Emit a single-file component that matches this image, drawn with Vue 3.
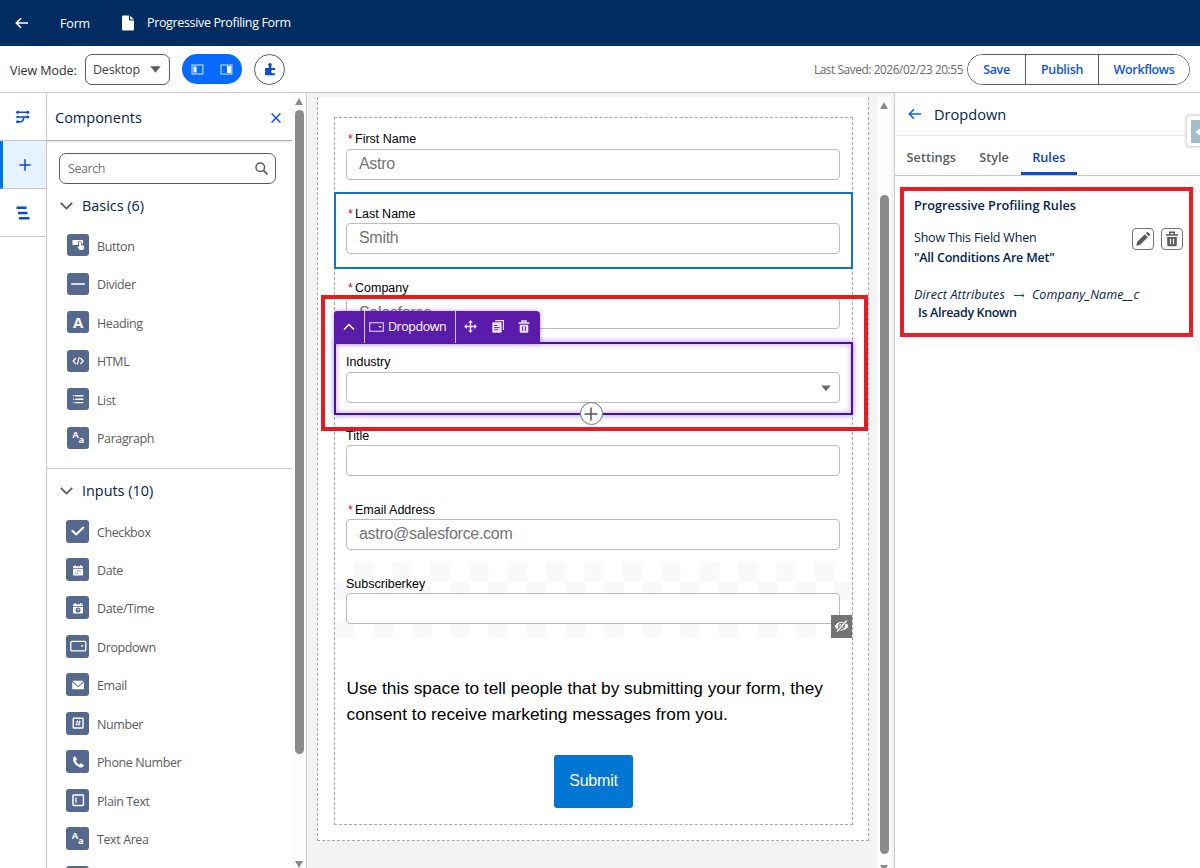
<script setup>
import { ref } from "vue";

const search = ref("");
const activeTab = ref("Rules");
const tabs = ["Settings", "Style", "Rules"];

// 22x22 glyphs, letters are drawn as text instead
const glyphs = {
  button: '<path fill="#fff" d="M5.5 6h10.5v4h-1.2V8.8a1.9 1.9 0 0 0-3.8 0V11H5.5z"/><path fill="#fff" d="M12 8.6a1 1 0 0 1 2 0V11l2.2.5q.8.2.8 1v1.2q0 2.3-1.6 2.3h-2.2q-.6 0-1-.6l-1.8-2.3q.6-1 1.6-.2z"/>',
  divider: '<path stroke="#fff" stroke-width="1.6" stroke-linecap="round" d="M4.8 11h12.6"/>',
  html: '<path fill="none" stroke="#fff" stroke-width="1.3" d="M9 8l-2.8 3L9 14M13.4 8l2.8 3-2.8 3M12.2 7.2l-2 7.6"/>',
  list: '<path stroke="#fff" stroke-width="1.4" d="M8.2 7.8h8.2M8.2 11.2h8.2M8.2 14.6h8.2M6 7.8h1.3M6 11.2h1.3M6 14.6h1.3"/>',
  checkbox: '<path fill="none" stroke="#fff" stroke-width="2.1" stroke-linecap="round" stroke-linejoin="round" d="M5.4 10.8l3.6 3.6 7.4-6.8"/>',
  date: '<path fill="#fff" d="M6 7.2h1.6V6H9v1.2h4V6h1.4v1.2H16V9H6zM6 9.8h10v5.6q0 1-1 1H7q-1 0-1-1z"/><path stroke="#54698d" stroke-width="1.1" d="M10.2 11.9h1.1M12.5 11.9h1.1M8 14.2h1.1M10.2 14.2h1.1"/>',
  datetime: '<path fill="#fff" d="M6 7.2h1.6V6H9v1.2h4V6h1.4v1.2H16V9H6zM6 9.8h10v5.6q0 1-1 1H7q-1 0-1-1z"/><circle cx="11" cy="13" r="2.5" fill="#54698d"/><path stroke="#fff" stroke-width=".8" fill="none" d="M11 11.6V13h1.2"/>',
  dropdown: '<rect x="3.8" y="6.4" width="15" height="9.4" rx="1" fill="none" stroke="#fff" stroke-width="1.3"/><path fill="#fff" d="M13.6 10.2h3l-1.5 2z"/>',
  email: '<path fill="#fff" d="M5.4 6.8h11.4l-5.7 5.2zM5.2 8l5.9 5.3L17 8v6.4q0 .9-.9.9H6.1q-.9 0-.9-.9z"/>',
  number: '<rect x="6.2" y="6.2" width="9.8" height="9.8" rx=".6" fill="none" stroke="#fff" stroke-width="1.4"/><path stroke="#fff" stroke-width=".9" d="M10.4 8.4l-.9 5.2M12.8 8.4l-.9 5.2M8.8 10h5M8.4 12.2h5"/>',
  phone: '<path fill="#fff" d="M6.9 5.7q.9-.8 1.6.2l1.1 1.7q.5.8-.2 1.5-.9.6-.4 1.4 1 1.8 2.8 2.7.8.5 1.4-.4.6-.8 1.4-.2l1.7 1.1q1 .7.2 1.6-1.6 2-4.2.9-4.6-1.9-6-6.3-.7-2.6.6-4.2z"/>',
  plain: '<rect x="6" y="6" width="10.4" height="10.4" rx=".6" fill="none" stroke="#fff" stroke-width="1.5"/><path stroke="#fff" stroke-width="1.2" d="M9 8.4v5.6"/>',
  blank: "",
};

const basics = [
  { name: "Button", icon: "button" },
  { name: "Divider", icon: "divider" },
  { name: "Heading", big: "A" },
  { name: "HTML", icon: "html" },
  { name: "List", icon: "list" },
  { name: "Paragraph", big: "A", small: "a" },
];
const inputs = [
  { name: "Checkbox", icon: "checkbox" },
  { name: "Date", icon: "date" },
  { name: "Date/Time", icon: "datetime" },
  { name: "Dropdown", icon: "dropdown" },
  { name: "Email", icon: "email" },
  { name: "Number", icon: "number" },
  { name: "Phone Number", icon: "phone" },
  { name: "Plain Text", icon: "plain" },
  { name: "Text Area", big: "A", small: "a" },
  { name: "", icon: "blank" },
];
const sections = [
  { title: "Basics (6)", items: basics, key: "basics" },
  { title: "Inputs (10)", items: inputs, key: "inputs" },
];

const fields = [
  { label: "First Name", required: true, placeholder: "Astro" },
  { label: "Last Name", required: true, placeholder: "Smith", state: "hovered" },
  { label: "Company", required: true, placeholder: "Salesforce" },
  { label: "Industry", state: "selected" },
  { label: "Title" },
  { label: "Email Address", required: true, placeholder: "astro@salesforce.com" },
  { label: "Subscriberkey", state: "concealed" },
];
</script>

<template>
  <div class="builder">
    <header class="top-bar">
      <div class="top-back">
        <svg width="14" height="12" viewBox="0 0 14 12"><path d="M13 6H1.500M6 1.200L1.300 6 6 10.800" fill="none" stroke="#fff" stroke-width="1.600" /></svg>
      </div>
      <div class="top-form">Form</div>
      <div class="top-name">
        <svg width="14" height="16" viewBox="0 0 14 16"><path d="M2 .5h6V4.500q0 1 1 1h4V14q0 1.500-1.500 1.500h-9Q1 15.500 1 14V2Q1 .5 2 .5zM9.200.700L13 4.500H9.200z" fill="#fff" /></svg>
        <span>Progressive Profiling Form</span>
      </div>
    </header>

    <div class="tool-bar">
      <span class="view-label">View Mode:</span>
      <button class="view-select">
        <span>Desktop</span>
        <svg width="11" height="7" viewBox="0 0 11 7"><path d="M.3.300h10.400L5.500 6.700z" fill="#5c5c5c" /></svg>
      </button>
      <div class="pane-toggle">
        <svg width="13" height="11" viewBox="0 0 13 11"><rect x="1" y="1" width="10.800" height="9" fill="none" stroke="#a9cdff" stroke-width="1.300" /><path d="M2.500 2.500h3v6h-3z" fill="#fff" /></svg>
        <svg width="13" height="11" viewBox="0 0 13 11"><rect x="1" y="1" width="10.800" height="9" fill="none" stroke="#a9cdff" stroke-width="1.300" /><path d="M7 2h4v7H7z" fill="#fff" /></svg>
      </div>
      <button class="round-button">
        <svg width="12" height="14" viewBox="0 0 12 14"><path d="M1.500 6h3.300V4.200a1.800 1.800 0 1 1 2.400 0V6h3.300q.5 0 .5.500v1.400H9.500a1.800 1.800 0 1 0 0 3.400H11v1.200q0 .8-.8.8h-8.400q-.8 0-.8-.8V10.500q1-.7 0-1.600V6.500q0-.5.500-.5z" fill="#0b4bd0" /></svg>
      </button>
      <span class="last-saved">Last Saved: 2026/02/23 20:55</span>
      <div class="button-group">
        <button class="save">Save</button>
        <button class="publish">Publish</button>
        <button class="workflows">Workflows</button>
      </div>
    </div>

    <div class="workspace">
      <nav class="rail">
        <div class="rail-item">
          <svg width="14" height="14" viewBox="0 0 14 14"><path d="M1 2.200h11M1 7h11M1 11.800h3.500Q7 11.800 8 7" fill="none" stroke="#0b4bd0" stroke-width="1.500" /><g fill="#0b4bd0"><circle cx="1.600" cy="2.200" r="1.500" /><circle cx="11.800" cy="2.200" r="1.500" /><circle cx="11.800" cy="7" r="1.500" /><circle cx="1.600" cy="7" r="1.300" /><circle cx="1.600" cy="11.800" r="1.500" /></g></svg>
        </div>
        <div class="rail-item rail-active">
          <svg width="12" height="12" viewBox="0 0 12 12"><path d="M6 .3v11.400M.3 6h11.400" stroke="#0b4bd0" stroke-width="1.500" /></svg>
        </div>
        <div class="rail-item">
          <svg width="14" height="14" viewBox="0 0 14 14"><path d="M.5 1.700h10M2 7h9.500M3 12.300h10.500" stroke="#0b4bd0" stroke-width="2.400" /></svg>
        </div>
      </nav>

      <aside class="components">
        <div class="components-body">
          <div class="components-head">
            <span>Components</span>
            <svg width="10" height="10" viewBox="0 0 10 10"><path d="M.6.600l8.800 8.800M9.400.600L.6 9.400" stroke="#0b4bd0" stroke-width="1.400" /></svg>
          </div>
          <div class="search-box">
            <input v-model="search" placeholder="Search" />
            <svg width="13" height="13" viewBox="0 0 13 13"><circle cx="5.300" cy="5.300" r="4.300" fill="none" stroke="#5c5c5c" stroke-width="1.500" /><path d="M8.400 8.400l4 4" stroke="#5c5c5c" stroke-width="1.700" /></svg>
          </div>
          <section v-for="section in sections" :key="section.key" :class="section.key">
            <div class="section-title">
              <svg width="13" height="8" viewBox="0 0 13 8"><path d="M.8.900l5.700 5.700L12.200.900" fill="none" stroke="#555" stroke-width="1.700" /></svg>
              <span>{{ section.title }}</span>
            </div>
            <div v-for="item in section.items" :key="item.name" class="component-item">
              <span class="tile">
                <svg v-if="item.icon" width="22" height="22" viewBox="0 0 22 22" v-html="glyphs[item.icon]"></svg>
                <template v-else>
                  <b :class="{ heading: !item.small }">{{ item.big }}</b>
                  <b v-if="item.small" class="lower">{{ item.small }}</b>
                </template>
              </span>
              <span>{{ item.name }}</span>
            </div>
          </section>
        </div>
        <div class="scroll-track">
          <i class="arrow-up"></i>
          <i class="thumb"></i>
          <i class="arrow-down"></i>
        </div>
      </aside>

      <main class="canvas">
        <div class="page">
          <div class="form">
            <div v-for="field in fields" :key="field.label" class="field" :class="field.state">
              <label><em v-if="field.required">*</em>{{ field.label }}</label>
              <div class="control">
                {{ field.placeholder }}
                <svg v-if="field.state === 'selected'" class="caret" width="10" height="7" viewBox="0 0 10 7"><path d="M.3.500h9.400L5 6.300z" fill="#6b6b6b" /></svg>
              </div>
              <div v-if="field.state === 'hovered'" class="hover-outline"></div>
              <template v-if="field.state === 'selected'">
                <div class="select-outline"></div>
                <div class="field-tools">
                  <span class="tool-up"><svg width="12" height="8" viewBox="0 0 12 8"><path d="M1 6.500l5-5 5 5" fill="none" stroke="#fff" stroke-width="1.500" /></svg></span>
                  <span class="tool-name">
                    <svg width="15" height="10" viewBox="0 0 15 10"><rect x=".7" y=".7" width="13.600" height="8.600" fill="none" stroke="#d9c6f3" stroke-width="1.200" /><path d="M9.500 4h3L11 6z" fill="#fff" /></svg>
                    Dropdown
                  </span>
                  <span class="tool-actions">
                    <svg width="13" height="13" viewBox="0 0 13 13"><path d="M6.500 2v9M2 6.500h9" stroke="#eee4fa" stroke-width="1.500" /><path d="M6.500 0l2.400 2.800H4.100zM6.500 13l2.400-2.800H4.100zM0 6.500l2.800-2.400v4.800zM13 6.500l-2.800-2.400v4.800z" fill="#eee4fa" /></svg>
                    <svg width="12" height="13" viewBox="0 0 12 13"><path d="M3.200.500h8.300v9.500" fill="none" stroke="#eee4fa" stroke-width="1.300" /><rect x=".3" y="2.300" width="9.300" height="10.400" rx=".8" fill="#eee4fa" /><path d="M2.200 5.500h3M2.200 7.600h5.400M2.200 9.700h4" stroke="#5a1ba9" stroke-width=".9" /></svg>
                    <svg width="12" height="13" viewBox="0 0 12 13"><path d="M.5 3h11M4 2.600V1h4v1.600" fill="none" stroke="#eee4fa" stroke-width="1.500" /><path d="M1.700 4.700h8.600v7q0 1-1 1H2.700q-1 0-1-1z" fill="#eee4fa" /><path d="M4.600 6.300v4.600M7.400 6.300v4.600" stroke="#5a1ba9" stroke-width="1" /></svg>
                  </span>
                </div>
                <span class="add-below"><svg width="14" height="14" viewBox="0 0 14 14"><path d="M7 .5v13M.5 7h13" stroke="#555" stroke-width="1.500" /></svg></span>
              </template>
              <span v-if="field.state === 'concealed'" class="hidden-badge">
                <svg width="15" height="12" viewBox="0 0 15 12"><path d="M.7 6.500Q3 1.800 7.700 1.800q4.700 0 6.700 4.500Q12 10.400 7.500 10.400 3 10.400.7 6.500z" fill="#fff" /><circle cx="7.500" cy="6.100" r="2.800" fill="none" stroke="#747474" stroke-width="1.100" /><path d="M12.800.200L2.900 11.800" stroke="#747474" stroke-width="3" /><path d="M12.600.500L3 11.600" stroke="#fff" stroke-width="1.400" /></svg>
              </span>
            </div>
            <p class="consent">Use this space to tell people that by submitting your form, they<br />consent to receive marketing messages from you.</p>
            <button class="submit">Submit</button>
          </div>
        </div>
        <div class="mark-box"></div>
        <div class="scroll-track">
          <i class="arrow-up"></i>
          <i class="thumb"></i>
          <i class="arrow-down"></i>
        </div>
      </main>

      <aside class="settings">
        <div class="settings-head">
          <svg width="14" height="12" viewBox="0 0 14 12"><path d="M13 6H1.500M6 1.200L1.300 6 6 10.800" fill="none" stroke="#0b5cf0" stroke-width="1.500" /></svg>
          <span>Dropdown</span>
        </div>
        <div class="tabs">
          <span v-for="tab in tabs" :key="tab" :class="{ active: tab === activeTab }" @click="activeTab = tab">{{ tab }}</span>
        </div>
        <div class="rules">
          <h3>Progressive Profiling Rules</h3>
          <div class="rule-head">
            <div class="rule-text">
              <span>Show This Field When</span>
              <strong>"All Conditions Are Met"</strong>
            </div>
            <button class="icon-button">
              <svg width="16" height="16" viewBox="0 0 16 16"><path d="M1.200 14.800l1-4L9.800 3.200l3 3L5.200 13.800zM10.700 2.300l1.100-1.100q.6-.5 1.200 0l1.800 1.800q.5.600 0 1.200l-1.100 1.100z" fill="#5c5c5c" /></svg>
            </button>
            <button class="icon-button">
              <svg width="14" height="16" viewBox="0 0 14 16"><path d="M1 4h12M4.800 3.400V1.300h4.400v2.100" fill="none" stroke="#5c5c5c" stroke-width="1.600" /><path d="M2.200 6h9.600v8q0 1.200-1.200 1.200H3.400q-1.200 0-1.200-1.200z" fill="#5c5c5c" /><path d="M5.500 7.800v5.400M8.500 7.800v5.400" stroke="#fff" stroke-width="1.100" /></svg>
            </button>
          </div>
          <div class="rule-path">
            <em>Direct Attributes</em>
            <svg width="11" height="7" viewBox="0 0 11 7"><path d="M0 3.500h10M8.300 1.900l1.800 1.600-1.800 1.600" fill="none" stroke="#2b4468" stroke-width="1" /></svg>
            <em>Company_Name__c</em>
          </div>
          <strong class="rule-result">Is Already Known</strong>
        </div>
        <div class="side-handle">
          <span><svg width="8" height="12" viewBox="0 0 8 12"><path d="M8 0v12L.5 6z" fill="#fff" /></svg></span>
        </div>
      </aside>
    </div>
  </div>
</template>

<style>
body {
  margin: 0;
  overflow: hidden;
}
</style>

<style scoped>
* {
  box-sizing: border-box;
}
.builder {
  display: flex;
  flex-direction: column;
  width: 1200px;
  height: 868px;
  overflow: hidden;
  background: #fff;
  font-family: "Open Sans", "Noto Sans", sans-serif;
  font-size: 12.5px;
  letter-spacing: -0.2px;
  color: #03234d;
}
svg {
  display: block;
  flex: none;
}
button {
  font: inherit;
  letter-spacing: inherit;
  padding: 0;
  background: #fff;
}

/* top bar */
.top-bar {
  display: flex;
  flex: none;
  height: 46px;
  background: #032d60;
  color: #fff;
  font-weight: 500;
}
.top-bar > div {
  display: flex;
  align-items: center;
}
.top-back {
  width: 45px;
  padding-left: 15px;
  border-right: 1px solid #02275a;
}
.top-form {
  width: 60px;
  padding: 1px 0 0 1px;
  justify-content: center;
  border-right: 1px solid #02275a;
}
.top-name {
  padding: 0 0 1px 16px;
  gap: 12px;
  letter-spacing: -0.35px;
}

/* tool bar */
.tool-bar {
  display: flex;
  flex: none;
  align-items: center;
  height: 47px;
  padding: 0 10px;
  border-bottom: 1px solid #c9c9c9;
}
.view-label {
  width: 75px;
  padding-top: 2px;
  color: #2e2e2e;
  font-weight: 500;
  letter-spacing: -0.05px;
  white-space: nowrap;
}
.view-select {
  display: flex;
  align-items: center;
  justify-content: space-between;
  width: 85px;
  height: 31px;
  padding: 0 8px 0 7px;
  border: 1px solid #5c5c5c;
  border-radius: 7px;
  color: #444;
}
.pane-toggle {
  display: flex;
  align-items: center;
  justify-content: space-between;
  width: 60px;
  height: 30px;
  margin: 0 12px;
  padding: 0 9px;
  border-radius: 15px;
  background: #066afe;
}
.round-button {
  display: flex;
  align-items: center;
  justify-content: center;
  width: 31px;
  height: 31px;
  border: 1px solid #5c5c5c;
  border-radius: 50%;
}
.last-saved {
  margin-left: auto;
  margin-right: 4px;
  color: #6b6b6b;
  font-size: 11.8px;
  letter-spacing: -0.4px;
}
.button-group {
  display: flex;
  height: 31px;
  border: 1px solid #5c5c5c;
  border-radius: 16px;
  overflow: hidden;
}
.button-group button {
  border: 0;
  border-right: 1px solid #5c5c5c;
  color: #0b57d8;
  font-weight: 600;
  letter-spacing: -0.35px;
}
.save {
  width: 58px;
}
.publish {
  width: 73px;
}
.button-group .workflows {
  width: 90px;
  border-right: 0;
}

.workspace {
  display: flex;
  flex: 1;
  min-height: 0;
}

/* left rail */
.rail {
  flex: none;
  width: 47px;
  border-right: 1px solid #c9c9c9;
}
.rail-item {
  display: flex;
  align-items: center;
  justify-content: center;
  height: 48px;
  border-bottom: 1px solid #c9c9c9;
}
.rail-active {
  border-left: 3px solid #0176d3;
  background: #e6f2fd;
}

/* components panel */
.components {
  display: flex;
  flex: none;
  width: 260px;
  border-right: 1px solid #c9c9c9;
  overflow: hidden;
}
.components-body {
  width: 245px;
  flex: none;
}
.components-head {
  display: flex;
  align-items: center;
  justify-content: space-between;
  height: 48px;
  padding: 2px 11px 0 8px;
  border-bottom: 1px solid #aaa;
  box-shadow: 0 1px 2px rgba(0, 0, 0, 0.12);
  font-size: 14.5px;
  letter-spacing: 0;
}
.search-box {
  display: flex;
  align-items: center;
  width: 217px;
  height: 31px;
  margin: 12px 0 0 12px;
  padding: 0 7px 0 8px;
  border: 1px solid #5c5c5c;
  border-radius: 7px;
}
.search-box input {
  flex: 1;
  min-width: 0;
  padding: 0;
  border: 0;
  outline: 0;
  font: inherit;
  letter-spacing: -0.45px;
}
.search-box input::placeholder {
  color: #747474;
}
.section-title {
  display: flex;
  align-items: center;
  gap: 9px;
  padding-left: 13px;
  font-size: 14.4px;
  letter-spacing: 0;
}
.basics .section-title {
  height: 43px;
}
.inputs {
  margin-top: 10px;
  border-top: 1px solid #c9c9c9;
}
.inputs .section-title {
  height: 44px;
}
.component-item {
  display: flex;
  align-items: center;
  gap: 8px;
  height: 38.45px;
  padding-left: 20px;
  color: #5c5c5c;
  letter-spacing: -0.4px;
}
.component-item > span:last-child {
  padding-top: 0.5px;
}
.inputs .component-item {
  padding-left: 19px;
}
.tile {
  display: flex;
  align-items: center;
  justify-content: center;
  width: 22px;
  height: 22px;
  margin-top: -1.5px;
  border-radius: 3px;
  background: #54698d;
  color: #fff;
}
.inputs .tile {
  width: 23px;
  height: 23px;
}
.tile b {
  font-size: 9.5px;
  line-height: 10px;
  margin-top: -5px;
}
.tile .lower {
  margin-top: 4px;
}
.tile .heading {
  font-size: 15px;
  line-height: 20px;
  margin-top: -1px;
}

/* scrollbars */
.scroll-track {
  display: flex;
  flex-direction: column;
  align-items: center;
  flex: none;
  width: 14px;
  background: #fcfcfc;
}
.arrow-up,
.arrow-down {
  flex: none;
  width: 0;
  border: 4.5px solid transparent;
}
.arrow-up {
  margin-top: 5px;
  border-top: 0;
  border-bottom: 7px solid #8b8b8b;
}
.arrow-down {
  border-bottom: 0;
  border-top: 7px solid #8b8b8b;
}
.thumb {
  flex: none;
  width: 9px;
  border-radius: 5px;
  background: #8b8b8b;
}
.components .thumb {
  height: 644px;
  margin: 5px 0 107px;
}

/* canvas */
.canvas {
  position: relative;
  display: flex;
  flex: none;
  justify-content: space-between;
  width: 588px;
  padding: 4px 3px 0 10px;
  border-right: 1px solid #c9c9c9;
  background: #f3f3f3;
  overflow: hidden;
}
.canvas .thumb {
  height: 659px;
  margin: 86px 0 11px;
}
.page {
  width: 552px;
  height: 744px;
  padding: 20px 15px 15px 16px;
  border: 1px dashed #aaa;
  border-top: 0;
  background: #fff;
}
.form {
  width: 519px;
  height: 708px;
  border: 1px dashed #aaa;
  font-family: "Liberation Sans", Arial, sans-serif;
  letter-spacing: 0;
  color: #000;
}
.field {
  position: relative;
  height: 74.1px;
  padding: 11px 12px 0 11px;
}
.field:nth-child(-n + 3) {
  height: 74.3px;
}
.field.selected {
  height: 73.4px;
}
.field label {
  display: flex;
  align-items: center;
  height: 20px;
  padding-top: 0.6px;
  font-size: 12.5px;
}
.field em {
  width: 9px;
  padding-left: 2px;
  color: #ea001e;
  font-style: normal;
}
.control {
  display: flex;
  align-items: center;
  width: 494px;
  height: 31px;
  padding: 0 9px 1px 12px;
  border: 1px solid #bcbcbc;
  border-radius: 4px;
  background: #fff;
  color: #747474;
  font-size: 16px;
  letter-spacing: -0.3px;
}
.caret {
  margin: 4px -1px 0 auto;
}
.hover-outline {
  position: absolute;
  inset: 0 -1px -2px -1px;
  border: 2px solid #1173cf;
}
.select-outline {
  position: absolute;
  inset: 1px -1px -1px -1px;
  border: 2px solid #4a0f9c;
  box-shadow: 0 0 5px 1px rgba(120, 50, 220, 0.45), inset 0 0 5px 1px rgba(120, 50, 220, 0.35);
}
.field-tools {
  position: absolute;
  display: flex;
  left: -1px;
  top: -30px;
  width: 206px;
  height: 32px;
  border-radius: 3px 4px 0 0;
  background: #5a1ba9;
  color: #fff;
  box-shadow: 0 0 4px rgba(120, 50, 220, 0.5);
  font: 500 12.5px "Open Sans", "Noto Sans", sans-serif;
  letter-spacing: -0.45px;
}
.field-tools > span {
  display: flex;
  align-items: center;
}
.tool-up {
  width: 31px;
  justify-content: center;
  border-right: 1px solid #d9c6f3;
}
.tool-name {
  width: 91px;
  gap: 4px;
  padding-left: 4px;
  border-right: 1px solid #d9c6f3;
}
.tool-actions {
  flex: 1;
  justify-content: space-between;
  padding: 0 10px 0 8px;
}
.add-below {
  position: absolute;
  left: 244.5px;
  bottom: -11px;
  display: flex;
  align-items: center;
  justify-content: center;
  width: 23px;
  height: 23px;
  border: 1px solid #747474;
  border-radius: 50%;
  background: #fff;
  z-index: 1;
}
.concealed {
  background: repeating-conic-gradient(#f9f9f9 0 25%, #fff 0 50%) 0 0 / 38.4px 38.4px;
}
.hidden-badge {
  position: absolute;
  right: 0;
  bottom: -1px;
  display: flex;
  align-items: center;
  justify-content: center;
  width: 21px;
  height: 23px;
  background: #747474;
}
.consent {
  margin: 38px 0 28px 11.5px;
  font-size: 17.3px;
  line-height: 26px;
  white-space: nowrap;
}
.submit {
  display: block;
  width: 79px;
  height: 53px;
  margin: 0 auto;
  border: 0;
  border-radius: 3px;
  background: #0176d3;
  color: #fff;
  font-size: 16px;
  letter-spacing: -0.2px;
}
.mark-box {
  position: absolute;
  left: 14px;
  top: 202px;
  width: 547px;
  height: 136px;
  border: 4px solid #e31b23;
  z-index: 2;
}

/* settings panel */
.settings {
  position: relative;
  flex: 1;
  min-width: 0;
  overflow: hidden;
}
.settings-head {
  display: flex;
  align-items: center;
  gap: 12px;
  height: 43px;
  padding-left: 13px;
  border-bottom: 1px solid #ececec;
  font-size: 14.6px;
  letter-spacing: 0;
}
.tabs {
  display: flex;
  height: 40px;
  border-bottom: 1px solid #c9c9c9;
  color: #5c5c5c;
  font-weight: 600;
}
.tabs span {
  padding: 12px 11.6px 0;
  border-bottom: 3px solid transparent;
  font-size: 12.7px;
  letter-spacing: 0.03px;
}
.tabs .active {
  border-color: #0b4fc4;
  color: #0b3fb5;
}
.rules {
  width: 293px;
  height: 150px;
  margin: 11px 0 0 5px;
  padding: 4px 6px 0 10px;
  border: 4px solid #ed1c24;
  line-height: 20px;
  white-space: nowrap;
}
.rules h3 {
  margin: 0;
  font-size: 12.7px;
  font-weight: 600;
  letter-spacing: 0;
}
.rule-head {
  display: flex;
  gap: 7px;
  margin-top: 13px;
}
.rule-text {
  flex: 1;
}
.rule-text span,
.rule-text strong {
  display: block;
}
.rules strong {
  font-weight: 600;
}
.icon-button {
  display: flex;
  align-items: center;
  justify-content: center;
  width: 22px;
  height: 22px;
  border: 1px solid #747474;
  border-radius: 4px;
}
.rule-path {
  display: flex;
  align-items: center;
  margin-top: 17px;
  letter-spacing: 0.1px;
}
.rule-path svg {
  margin: 0 7px 0 9px;
}
.rule-result {
  display: block;
  margin: -2px 0 0 4px;
  letter-spacing: -0.35px;
}
.side-handle {
  position: absolute;
  left: 291px;
  top: 22px;
  width: 20px;
  height: 32px;
  padding: 4px;
  border: 1px solid #ddd;
  border-radius: 4px;
  background: #fff;
  box-shadow: 0 0 3px rgba(0, 0, 0, 0.25);
}
.side-handle span {
  display: flex;
  align-items: center;
  justify-content: flex-start;
  width: 14px;
  height: 23px;
  padding-left: 4px;
  background: #a3bfcc;
}
</style>
